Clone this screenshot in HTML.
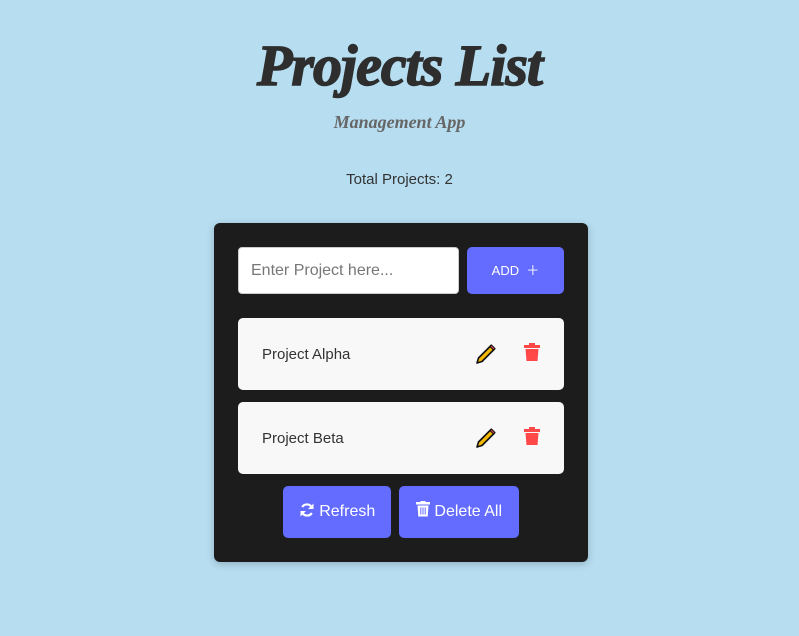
<!DOCTYPE html>
<html><head><style>
body{margin:0;width:799px;height:636px;background:#b6ddf0;font-family:"Liberation Sans",sans-serif;position:relative;overflow:hidden}
.t{position:absolute;left:0;width:799px;text-align:center;color:#2e2e2e}
h1{position:absolute;top:32px;left:0;width:799px;margin:0;text-align:center;font:italic bold 58px "Liberation Serif",serif;color:#2e2e2e;letter-spacing:-1px;-webkit-text-stroke:1.5px #2e2e2e}
.sub{top:112px;font:italic bold 18px "Liberation Serif",serif;color:#666}
.tot{top:171px;font-size:15px;color:#333}
.card{position:absolute;left:214px;top:223px;width:374px;height:339px;background:#1c1c1c;border-radius:6px;box-shadow:0 2px 8px rgba(0,0,0,.2)}
.in{position:absolute;left:24px;top:24px;width:221px;height:47px;box-sizing:border-box;background:#fff;border-radius:4px;border:1px solid #ccc;color:#777;font-size:16px;padding:14px 12px}
.add{position:absolute;left:253px;top:24px;width:97px;height:47px;background:#646cff;border-radius:5px;color:#fff;font-size:13px;text-align:center;line-height:47px}
.item{position:absolute;left:24px;width:326px;height:72px;background:#f8f8f8;border-radius:5px;font-size:15px;color:#333;line-height:74px;box-sizing:border-box;padding-left:24px}
.item svg{position:absolute;top:24px}
.btn{position:absolute;top:263px;height:52px;background:#646cff;border-radius:5px;color:#fff;font-size:16px;line-height:52px;text-align:center}
</style></head><body>
<h1>Projects List</h1>
<div class="t sub">Management App</div>
<div class="t tot">Total Projects: 2</div>
<div class="card">
<div class="in">Enter Project here...</div>
<div class="add">ADD &nbsp;＋</div>
<div class="item" style="top:95px">Project Alpha
<svg style="left:236px" width="24" height="24" viewBox="0 0 24 24"><path d="M3 21l1.5-5L17 3.5l3.5 3.5L8 19.5z" fill="#f5b800" stroke="#111" stroke-width="1.6" stroke-linejoin="round"/><path d="M16 4.5l3.5 3.5 1.5-1.5-3.5-3.5z" fill="#e0455a" stroke="#111" stroke-width="1"/></svg>
<svg style="left:285px;top:25px" width="18" height="19" viewBox="0 0 18 19"><rect x="1" y="2" width="16" height="3" fill="#ff4848"/><rect x="6" y="0" width="6" height="3" fill="#ff4848"/><path d="M2.5 6h13l-1 12h-11z" fill="#ff4848"/></svg></div>
<div class="item" style="top:179px">Project Beta
<svg style="left:236px" width="24" height="24" viewBox="0 0 24 24"><path d="M3 21l1.5-5L17 3.5l3.5 3.5L8 19.5z" fill="#f5b800" stroke="#111" stroke-width="1.6" stroke-linejoin="round"/><path d="M16 4.5l3.5 3.5 1.5-1.5-3.5-3.5z" fill="#e0455a" stroke="#111" stroke-width="1"/></svg>
<svg style="left:285px;top:25px" width="18" height="19" viewBox="0 0 18 19"><rect x="1" y="2" width="16" height="3" fill="#ff4848"/><rect x="6" y="0" width="6" height="3" fill="#ff4848"/><path d="M2.5 6h13l-1 12h-11z" fill="#ff4848"/></svg></div>
<div class="btn" style="left:69px;width:108px"><svg width="16" height="16" viewBox="0 0 16 16" style="vertical-align:-2px"><path d="M13 6A5.5 5.5 0 0 0 3.2 5M3 10a5.5 5.5 0 0 0 9.8 1" fill="none" stroke="#fff" stroke-width="2.2"/><path d="M14.5 1.5v5.5H9z M1.5 14.5V9H7z" fill="#fff"/></svg> Refresh</div>
<div class="btn" style="left:185px;width:120px"><svg width="14" height="16" viewBox="0 0 14 16" style="vertical-align:-1px"><rect x="0" y="1" width="14" height="2.5" fill="#fff"/><rect x="4.5" y="0" width="5" height="2" fill="#fff"/><path d="M1.5 4.5h11l-.8 11H2.3z" fill="#fff"/><path d="M4.8 6.5v7M7 6.5v7M9.2 6.5v7" stroke="#646cff" stroke-width="1"/></svg> Delete All</div>
</div>
</body></html>
